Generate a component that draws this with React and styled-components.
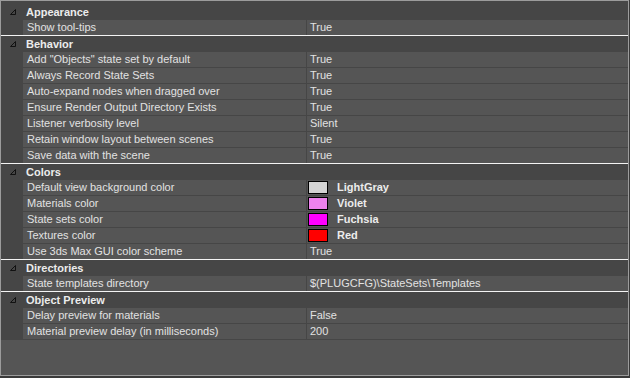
import React from 'react'
import styled, { createGlobalStyle } from 'styled-components'

const GlobalStyle = createGlobalStyle`
  body {
    margin: 0;
    background: #3a3a3a;
    font-family: 'Liberation Sans', Arial, sans-serif;
  }
`

const Panel = styled.div`
  box-sizing: border-box;
  width: 629px;
  height: 376px;
  border: 1px solid #9c9c9c;
  background: #555555;
  display: flex;
  flex-direction: column;
  font-size: 11px;
  color: #e2e2e2;
`

const Header = styled.div`
  display: flex;
  align-items: center;
  height: 16px;
  padding-top: ${p => (p.$first ? '3px' : '0')};
  background: #464646;
  font-weight: bold;
  color: #ececec;
`

const Toggle = styled.span`
  width: 22px;
  display: flex;
  justify-content: flex-end;
  padding-right: 7px;
  box-sizing: border-box;
`

const HeaderLabel = styled.span`
  padding-left: 3px;
  line-height: 16px;
`

const Row = styled.div`
  display: grid;
  grid-template-columns: 22px 283px 1px 1fr;
  height: 15px;
  border-bottom: 1px solid ${p => (p.$last ? '#f4f4f4' : '#464646')};
  line-height: 15px;
`

const Gutter = styled.div`
  background: #464646;
`

const Name = styled.div`
  padding-left: 4px;
  white-space: nowrap;
  overflow: hidden;
`

const Divider = styled.div`
  background: #464646;
`

const Value = styled.div`
  display: flex;
  align-items: center;
  padding-left: ${p => (p.$swatch ? '1px' : '3px')};
  white-space: nowrap;
`

const Swatch = styled.span`
  box-sizing: border-box;
  width: 20px;
  height: 13px;
  border: 1px solid #000;
  background: ${p => p.$color};
  margin-right: 9px;
`

const ColorName = styled.span`
  font-weight: bold;
  color: #ececec;
`

const Filler = styled.div`
  flex: 1;
`

const Arrow = () => (
  <svg width='6' height='6' viewBox='0 0 6 6'>
    <path d='M0.5 5.5 L5.5 0.5 L5.5 5.5 Z' fill='none' stroke='#111' strokeWidth='1' />
  </svg>
)

const categories = [
  {
    title: 'Appearance',
    items: [['Show tool-tips', 'True']]
  },
  {
    title: 'Behavior',
    items: [
      ['Add "Objects" state set by default', 'True'],
      ['Always Record State Sets', 'True'],
      ['Auto-expand nodes when dragged over', 'True'],
      ['Ensure Render Output Directory Exists', 'True'],
      ['Listener verbosity level', 'Silent'],
      ['Retain window layout between scenes', 'True'],
      ['Save data with the scene', 'True']
    ]
  },
  {
    title: 'Colors',
    items: [
      ['Default view background color', 'LightGray', '#d3d3d3'],
      ['Materials color', 'Violet', '#ee82ee'],
      ['State sets color', 'Fuchsia', '#ff00ff'],
      ['Textures color', 'Red', '#ff0000'],
      ['Use 3ds Max GUI color scheme', 'True']
    ]
  },
  {
    title: 'Directories',
    items: [['State templates directory', '$(PLUGCFG)\\StateSets\\Templates']]
  },
  {
    title: 'Object Preview',
    items: [
      ['Delay preview for materials', 'False'],
      ['Material preview delay (in milliseconds)', '200']
    ]
  }
]

const App = () => {
  return (
    <>
      <GlobalStyle />
      <Panel>
        {categories.map((cat, ci) => (
          <React.Fragment key={cat.title}>
            <Header $first={ci === 0}>
              <Toggle><Arrow /></Toggle>
              <HeaderLabel>{cat.title}</HeaderLabel>
            </Header>
            {cat.items.map(([name, value, color], i) => (
              <Row
                key={name}
                $last={i === cat.items.length - 1 && ci < categories.length - 1}
              >
                <Gutter />
                <Name>{name}</Name>
                <Divider />
                {color
                  ? (
                    <Value $swatch>
                      <Swatch $color={color} />
                      <ColorName>{value}</ColorName>
                    </Value>
                    )
                  : <Value>{value}</Value>}
              </Row>
            ))}
          </React.Fragment>
        ))}
        <Filler />
      </Panel>
    </>
  )
}

export default App
